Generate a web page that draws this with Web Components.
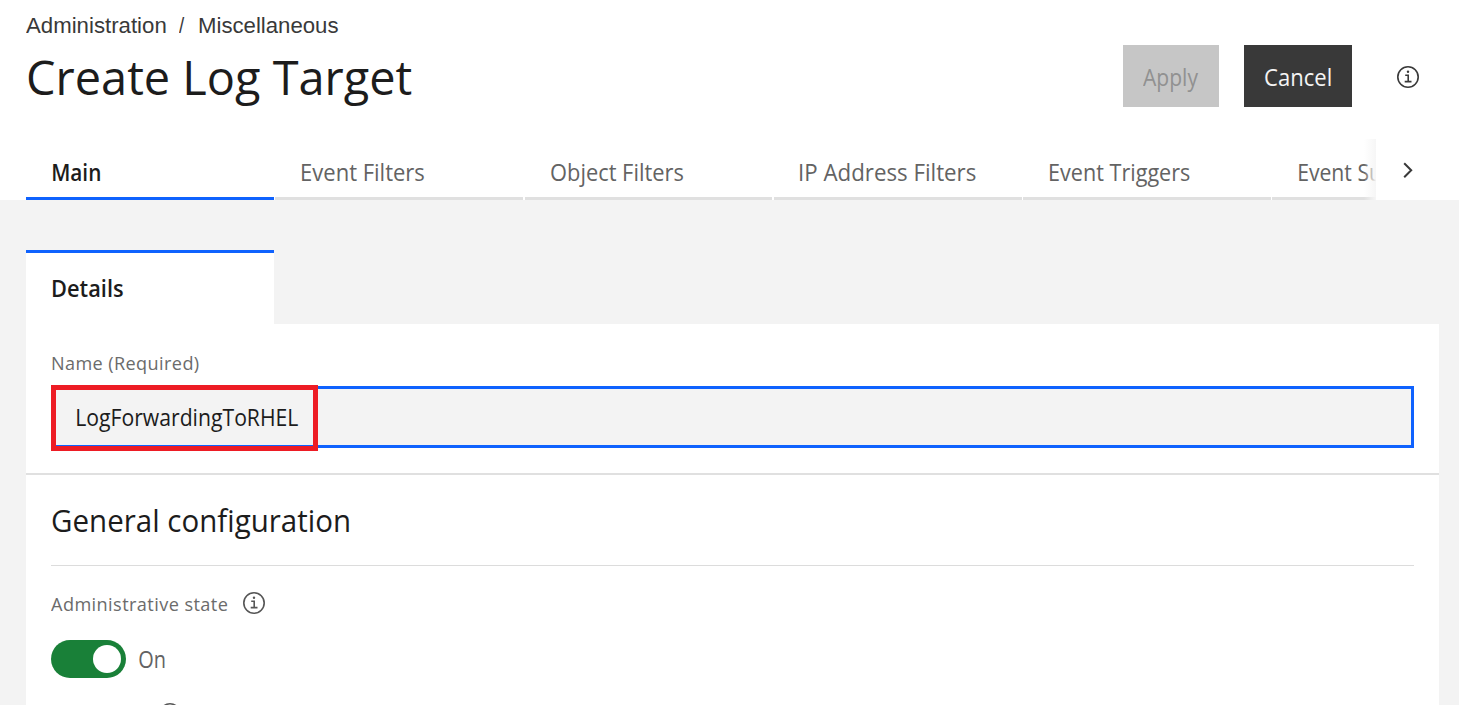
<!DOCTYPE html>
<html lang="en">
<head>
<meta charset="utf-8">
<title>Create Log Target</title>
<style>
html, body { margin: 0; height: 100%; overflow: hidden; background: #f3f3f3; }
body { font-family: "Open Sans", "Noto Sans", sans-serif; font-size: 22.8px; color: #1c1c1c; }
</style>
</head>
<body>
<log-target-page></log-target-page>
<script>
function define(name, html, ready) {
  customElements.define(name, class extends HTMLElement {
    connectedCallback() {
      if (this.shadowRoot) return;
      const root = this.attachShadow({ mode: "open" });
      const t = document.createElement("template");
      t.innerHTML = html;
      root.append(t.content.cloneNode(true));
      if (ready) ready.call(this, root);
    }
  });
}

/* One line of text whose glyphs span exactly the given width. */
define("fit-text", `
<style>
:host { display: block; flex: none; white-space: nowrap; }
span { display: inline-block; transform-origin: 0 50%; }
</style><span><slot></slot></span>`, function (root) {
  const w = parseFloat(this.getAttribute("w"));
  const cs = getComputedStyle(this);
  const ctx = document.createElement("canvas").getContext("2d");
  ctx.font = cs.fontWeight + " " + cs.fontSize + " " + cs.fontFamily;
  if (cs.letterSpacing !== "normal") ctx.letterSpacing = cs.letterSpacing;
  const m = ctx.measureText(this.textContent);
  const scale = w / (m.actualBoundingBoxRight + m.actualBoundingBoxLeft);
  this.style.width = w + "px";
  root.querySelector("span").style.transform =
    "translateX(" + (m.actualBoundingBoxLeft * scale) + "px) scaleX(" + scale + ")";
});

define("info-icon", `
<style>:host { display: block; width: 24px; height: 24px; flex: none; color: #393939; } svg { display: block; }</style>
<svg width="24" height="24" viewBox="0 0 24 24" fill="none" stroke="currentColor">
<circle cx="12" cy="12" r="10.2" stroke-width="1.6"/>
<path d="M9.2 10.3h3v6.2M8.7 16.6h6.8" stroke-width="1.6"/>
<circle cx="12" cy="6.8" r="1.2" fill="currentColor" stroke="none"/>
</svg>`);

define("crumb-trail", `
<style>
:host { display: flex; padding: 12px 0 0 25.7px; font-family: "Liberation Sans", Arial, sans-serif; font-size: 22px; line-height: 28px; color: #393939; }
.sep { margin: 0 14.3px 0 13.8px; }
</style>
<fit-text w="139.5">Administration</fit-text><fit-text class="sep" w="6">/</fit-text><fit-text w="139.5">Miscellaneous</fit-text>`);

define("action-button", `
<style>
:host { display: flex; box-sizing: border-box; height: 62px; padding-left: 21.5px; background: #393939; color: #f4f4f4; line-height: 66px; flex: none; }
:host([disabled]) { background: #c6c6c6; color: #919191; }
</style><slot></slot>`);

define("title-bar", `
<style>
:host { display: flex; height: 100px; }
.title { margin-left: 28.3px; font-size: 47.2px; line-height: 75px; flex: 1; }
.apply { margin-top: 5.4px; width: 96.5px; margin-right: 24.5px; padding-left: 20.5px; }
.cancel { margin-top: 5.4px; width: 108.5px; margin-right: 43.5px; }
info-icon { margin: 24.5px 39.5px 0 0; }
</style>
<div class="title"><fit-text w="383.5">Create Log Target</fit-text></div>
<action-button class="apply" disabled><fit-text w="55.5">Apply</fit-text></action-button>
<action-button class="cancel"><fit-text w="65.5">Cancel</fit-text></action-button>
<info-icon></info-icon>`);

define("tab-item", `
<style>
:host { display: block; box-sizing: border-box; flex: none; width: 247.7px; height: 61px; padding-left: 26.5px; border-bottom: 3px solid #e0e0e0; color: #636363; line-height: 67px; }
:host([selected]) { border-color: #0f62fe; color: #1c1c1c; font-weight: 600; }
</style><slot></slot>`);

define("tab-strip", `
<style>
:host { display: flex; height: 61px; padding-left: 26px; }
.tabs { display: flex; gap: 1.6px; flex: 1; overflow: hidden; position: relative; }
.tabs::after { content: ""; position: absolute; right: 0; top: 0; width: 12px; height: 100%; background: linear-gradient(90deg, #fff0, #f6f6f6); }
.next { width: 83px; flex: none; background: #fff; display: flex; justify-content: center; }
svg { margin: 21.5px 20px 0 0; width: 18px; height: 18px; flex: none; }
</style>
<div class="tabs">
<tab-item selected><fit-text w="47">Main</fit-text></tab-item>
<tab-item><fit-text w="122">Event Filters</fit-text></tab-item>
<tab-item><fit-text w="132">Object Filters</fit-text></tab-item>
<tab-item><fit-text w="175.5">IP Address Filters</fit-text></tab-item>
<tab-item><fit-text w="139.5">Event Triggers</fit-text></tab-item>
<tab-item><fit-text w="191">Event Subscriptions</fit-text></tab-item>
</div>
<div class="next"><svg viewBox="0 0 18 18" fill="none" stroke="#393939" stroke-width="2"><path d="M5.2 2.2 12.2 9.2 5.2 16.2"/></svg></div>`);

define("page-header", `
<style>:host { display: flex; flex-direction: column; height: 200px; background: #fff; flex: none; } tab-strip { margin-top: -1px; }</style>
<crumb-trail></crumb-trail><title-bar></title-bar><tab-strip></tab-strip>`);

define("text-field", `
<style>
:host { display: block; position: relative; box-sizing: border-box; height: 62px; border: 3px solid #0f62fe; background: #f3f3f3; line-height: 57px; padding-left: 23.4px; }
.mark { position: absolute; left: -3px; top: -4px; width: 267px; height: 66px; box-sizing: border-box; border: 5px solid #ed1c24; }
</style><slot></slot><div class="mark"></div>`);

define("toggle-switch", `
<style>
:host { display: flex; align-items: center; color: #636363; }
.track { display: flex; justify-content: flex-end; align-items: center; box-sizing: border-box; width: 74.5px; height: 37.5px; border-radius: 19px; background: #198038; padding-right: 4.5px; margin-right: 13px; }
.knob { width: 28.5px; height: 28.5px; border-radius: 50%; background: #fff; }
.txt { line-height: 36px; margin-top: 2px; }
</style><div class="track"><div class="knob"></div></div><div class="txt"><slot></slot></div>`);

define("details-card", `
<style>
:host { display: block; margin: 50px 20px 0 26px; }
.tab { box-sizing: border-box; width: 248px; height: 74px; background: #fff; border-top: 3px solid #0f62fe; padding-left: 26.5px; font-weight: 600; line-height: 72px; }
.body { background: #fff; height: 420px; overflow: hidden; }
.name { box-sizing: border-box; height: 151px; padding: 25px 25px 0; border-bottom: 2px solid #e0e0e0; }
.label { font-size: 17.6px; line-height: 28px; color: #6b6b6b; padding-left: 1px; letter-spacing: .4px; }
text-field { margin-top: 9px; }
.general { padding: 0 25px; }
.heading { font-size: 31.3px; line-height: 90px; height: 90px; border-bottom: 1px solid #dcdcdc; padding-left: 1px; }
.row { display: flex; height: 28px; margin-top: 24px; }
.row .label { padding: 0; margin: 0 15px 0 0; }
.row info-icon { margin-top: .5px; color: #565656; }
toggle-switch { margin-top: 22px; }
.next { margin-top: 23.5px; }
.next info-icon { margin: 0 0 0 107px; }
</style>
<div class="tab"><fit-text w="70.5">Details</fit-text></div>
<div class="body">
<div class="name"><div class="label"><fit-text w="147">Name (Required)</fit-text></div>
<text-field><fit-text w="221.5">LogForwardingToRHEL</fit-text></text-field></div>
<div class="general">
<div class="heading"><fit-text w="297">General configuration</fit-text></div>
<div class="row"><div class="label"><fit-text w="176">Administrative state</fit-text></div><info-icon></info-icon></div>
<toggle-switch><fit-text w="26">On</fit-text></toggle-switch>
<div class="row next"><info-icon></info-icon></div>
</div></div>`);

define("log-target-page", `
<style>:host { display: flex; flex-direction: column; height: 705px; overflow: hidden; background: #f3f3f3; }</style>
<page-header></page-header><details-card></details-card>`);
</script>
</body>
</html>
